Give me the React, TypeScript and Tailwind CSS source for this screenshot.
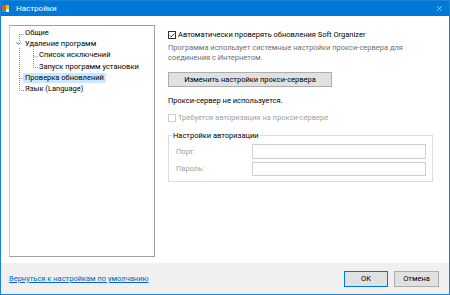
import { X, Check, ChevronDown } from "lucide-react"

const font = { fontFamily: 'Roboto, "Noto Sans", sans-serif' }

function TreeRow({
  label,
  indent,
  selected,
  chevron,
}: {
  label: string
  indent: number
  selected?: boolean
  chevron?: boolean
}) {
  return (
    <div className="relative flex h-[11.3px] items-center whitespace-nowrap" style={{ paddingLeft: indent }}>
      {chevron && (
        <ChevronDown className="absolute left-[5px] h-[7px] w-[7px] text-gray-700" strokeWidth={3} />
      )}
      <span className={selected ? "bg-[#cce8ff] px-[2px] leading-[10px]" : "px-[2px] leading-[10px]"}>{label}</span>
    </div>
  )
}

function TreeLines() {
  return (
    <svg className="pointer-events-none absolute left-0 top-0" width="146" height="80">
      <g stroke="#8a8a8a" strokeWidth="1" strokeDasharray="1 1" fill="none">
        <path d="M9.5 8 V15" />
        <path d="M9.5 22 V64.5 H14" />
        <path d="M9.5 8.5 H14" />
        <path d="M9.5 52.5 H14" />
        <path d="M23.5 23 V41.5 H28" />
        <path d="M23.5 30.5 H28" />
      </g>
    </svg>
  )
}

export default function App() {
  return (
    <div className="flex h-[295px] w-[450px] flex-col border border-[#1883d7] bg-white text-[7.5px] text-black" style={font}>
      {/* Title bar */}
      <div className="flex h-[15px] shrink-0 items-center bg-[#0078d7] text-white">
        <div className="ml-[1px] grid h-[7px] w-[7px] grid-cols-2 gap-0">
          <div className="bg-[#f25022]" />
          <div className="bg-[#ffb900]" />
          <div className="bg-[#00a4ef]" />
          <div className="bg-[#e6f3ff]" />
        </div>
        <span className="ml-[7px] text-[8px] leading-none">Настройки</span>
        <X className="ml-auto mr-[5px] h-[9px] w-[9px]" strokeWidth={1.5} />
      </div>

      {/* Body */}
      <div className="flex flex-1 pl-[8px] pt-[9px] pb-[5px]">
        <div className="relative h-[232px] w-[146px] shrink-0 border border-[#a0a0a0] border-l-[#c8c8c8] pt-[1px]">
          <TreeLines />
          <TreeRow label="Общие" indent={13} />
          <TreeRow label="Удаление программ" indent={13} chevron />
          <TreeRow label="Список исключений" indent={27} />
          <TreeRow label="Запуск программ установки" indent={27} />
          <TreeRow label="Проверка обновлений" indent={13} selected />
          <TreeRow label="Язык (Language)" indent={13} />
        </div>

        <div className="ml-[13px] flex flex-1 flex-col whitespace-nowrap pt-[5px]">
          <div className="flex items-center gap-[2px]">
            <div className="flex h-[8px] w-[8px] items-center justify-center border border-[#333]">
              <Check className="h-[7px] w-[7px]" strokeWidth={3} />
            </div>
            <span className="leading-[10px]">Автоматически проверять обновления Soft Organizer</span>
          </div>
          <p className="mt-[3px] leading-[10px] text-[#707070]">
            Программа использует системные настройки прокси-сервера для
            <br />
            соединения с Интернетом.
          </p>
          <button className="mt-[9px] h-[15px] w-[164px] border border-[#adadad] bg-[#e1e1e1] leading-none">
            Изменить настройки прокси-сервера
          </button>
          <div className="mt-[9px] leading-[10px]">Прокси-сервер не используется.</div>
          <div className="mt-[7px] flex items-center gap-[2px] text-[#a0a0a0]">
            <div className="h-[8px] w-[8px] border border-[#cccccc]" />
            <span className="leading-[10px]">Требуется авторизация на прокси-сервере</span>
          </div>

          <div className="relative mr-[16px] mt-[12px] h-[47px] border border-[#dcdcdc]">
            <span className="absolute -top-[5px] left-[3px] bg-white px-[1px] leading-[10px]">Настройки авторизации</span>
            <div className="mt-[8px] flex items-center text-[#a0a0a0]">
              <span className="w-[83px] pl-[7px]">Порт:</span>
              <div className="h-[15px] w-[174px] border border-[#cfcfcf]" />
            </div>
            <div className="mt-[3px] flex items-center text-[#a0a0a0]">
              <span className="w-[83px] pl-[7px]">Пароль:</span>
              <div className="h-[14px] w-[174px] border border-[#cfcfcf]" />
            </div>
          </div>
        </div>
      </div>

      {/* Footer */}
      <div className="flex h-[31px] shrink-0 items-center bg-[#f0f0f0] pl-[8px] pr-[10px]">
        <a className="text-[#0066cc] underline">Вернуться к настройкам по умолчанию</a>
        <button className="ml-auto h-[16px] w-[44px] border border-[#0078d7] bg-[#e1e1e1] leading-none">OK</button>
        <button className="ml-[6px] h-[16px] w-[45px] border border-[#adadad] bg-[#e1e1e1] leading-none">Отмена</button>
      </div>
    </div>
  )
}
